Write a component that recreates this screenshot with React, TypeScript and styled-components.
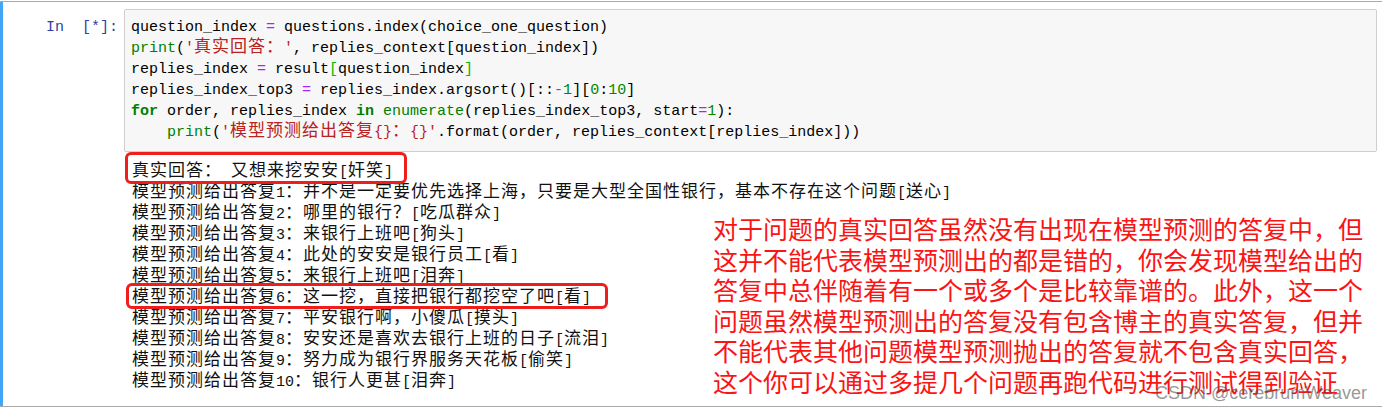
import React from "react";
import styled, { createGlobalStyle } from "styled-components";

const GlobalStyle = createGlobalStyle`
  html, body {
    margin: 0;
    padding: 0;
    background: #fff;
  }
  body {
    width: 1382px;
    height: 410px;
    overflow: hidden;
  }
`;

const MONO = `"Liberation Mono", "Noto Sans CJK SC", monospace`;

const Page = styled.div`
  position: relative;
  padding-top: 1px;
  font-family: ${MONO};
  font-size: 15px;
`;

const Cell = styled.div`
  border-top: 1px solid #ababab;
  border-bottom: 1px solid #ababab;
`;

const CellBody = styled.div`
  display: grid;
  grid-template-columns: 121px 1fr;
  row-gap: 10px;
  padding: 7px 5px 13px 0;
  border-left: 3px solid #42a5f5;
`;

const Prompt = styled.div`
  padding: 8px 6px 0 0;
  text-align: right;
  line-height: 21px;
  white-space: pre;
  color: #303f9f;
`;

const InputArea = styled.div`
  padding: 7px 6px 8px;
  background: #f7f7f7;
  border: 1px solid #cfcfcf;
  border-radius: 2px;
  color: #000;
`;

const Line = styled.div`
  height: 21px;
  line-height: 21px;
  white-space: pre;
`;

const Output = styled.div`
  grid-column: 2;
  padding-left: 8px;
  color: #111;
`;

// CJK glyphs take two monospace cells, as in the SimSun screenshot
const Han = styled.span`
  font-family: "Noto Sans CJK SC", sans-serif;
  font-size: 17px;
  line-height: 14px;
  letter-spacing: 1px;
`;

const tokenColors: Record<string, string> = {
  n: "#000",
  k: "#008000",
  b: "#008000",
  s: "#ba2121",
  o: "#aa22ff",
  m: "#008800",
  br: "#00bb00",
};

const Token = styled.span<{ $kind: string }>`
  color: ${(p) => tokenColors[p.$kind]};
  font-weight: ${(p) => (p.$kind === "k" ? 700 : 400)};
`;

const Marked = styled.span<{ $inset: string }>`
  position: relative;
  display: inline-block;
  height: 21px;

  &::after {
    content: "";
    position: absolute;
    inset: ${(p) => p.$inset};
    border: 3px solid #f01d1d;
    border-radius: 6px;
  }
`;

const Note = styled.div`
  position: absolute;
  left: 713px;
  top: 213px;
  width: 650px;
  font-family: "Noto Sans CJK SC", sans-serif;
  font-size: 25px;
  line-height: 30.5px;
  color: #fa1414;
  white-space: nowrap;
`;

const NoteLine = styled.div<{ $last?: boolean }>`
  text-align: justify;
  text-align-last: ${(p) => (p.$last ? "left" : "justify")};
`;

const Watermark = styled.div`
  position: absolute;
  right: 15px;
  top: 382px;
  font-family: "Liberation Sans", Arial, sans-serif;
  font-size: 18px;
  line-height: 22px;
  color: rgba(80, 80, 80, 0.6);
`;

const CJK = /([\u3000-\u9fff\uff00-\uffef]+)/;

const mix = (text: string) =>
  text
    .split(CJK)
    .filter((part) => part !== "")
    .map((part, i) => (CJK.test(part) ? <Han key={i}>{part}</Han> : part));

type Tok = [string, string];

const code: Tok[][] = [
  [["n", "question_index "], ["o", "="], ["n", " questions.index(choice_one_question)"]],
  [["b", "print"], ["n", "("], ["s", "'真实回答：'"], ["n", ", replies_context[question_index])"]],
  [["n", "replies_index "], ["o", "="], ["n", " result"], ["br", "["], ["n", "question_index"], ["br", "]"]],
  [
    ["n", "replies_index_top3 "], ["o", "="], ["n", " replies_index.argsort()[::"], ["o", "-"],
    ["m", "1"], ["n", "]["], ["m", "0"], ["n", ":"], ["m", "10"], ["n", "]"],
  ],
  [
    ["k", "for"], ["n", " order, replies_index "], ["k", "in"], ["n", " "], ["b", "enumerate"],
    ["n", "(replies_index_top3, start"], ["o", "="], ["m", "1"], ["n", "):"],
  ],
  [["n", "    "], ["b", "print"], ["n", "("], ["s", "'模型预测给出答复{}：{}'"], ["n", ".format(order, replies_context[replies_index]))"]],
];

const outputs = [
  "真实回答： 又想来挖安安[奸笑]",
  "模型预测给出答复1：并不是一定要优先选择上海，只要是大型全国性银行，基本不存在这个问题[送心]",
  "模型预测给出答复2：哪里的银行？[吃瓜群众]",
  "模型预测给出答复3：来银行上班吧[狗头]",
  "模型预测给出答复4：此处的安安是银行员工[看]",
  "模型预测给出答复5：来银行上班吧[泪奔]",
  "模型预测给出答复6：这一挖，直接把银行都挖空了吧[看]",
  "模型预测给出答复7：平安银行啊，小傻瓜[摸头]",
  "模型预测给出答复8：安安还是喜欢去银行上班的日子[流泪]",
  "模型预测给出答复9：努力成为银行界服务天花板[偷笑]",
  "模型预测给出答复10：银行人更甚[泪奔]",
];

// red boxes drawn over the screenshot
const marks: Record<number, string> = {
  0: "-10px -14px -1px -7px",
  6: "-5px -17px 0px -6px",
};

const notes = [
  "对于问题的真实回答虽然没有出现在模型预测的答复中，但",
  "这并不能代表模型预测出的都是错的，你会发现模型给出的",
  "答复中总伴随着有一个或多个是比较靠谱的。此外，这一个",
  "问题虽然模型预测出的答复没有包含博主的真实答复，但并",
  "不能代表其他问题模型预测抛出的答复就不包含真实回答，",
  "这个你可以通过多提几个问题再跑代码进行测试得到验证",
];

export default function App() {
  return (
    <Page>
      <GlobalStyle />
      <Cell>
        <CellBody>
          <Prompt>In  [*]:</Prompt>
          <InputArea>
            {code.map((line, i) => (
              <Line key={i}>
                {line.map(([kind, text], j) => (
                  <Token key={j} $kind={kind}>
                    {mix(text)}
                  </Token>
                ))}
              </Line>
            ))}
          </InputArea>
          <Output>
            {outputs.map((text, i) => (
              <Line key={i}>
                {marks[i] ? <Marked $inset={marks[i]}>{mix(text)}</Marked> : mix(text)}
              </Line>
            ))}
          </Output>
        </CellBody>
      </Cell>
      <Note>
        {notes.map((n, i) => (
          <NoteLine key={n} $last={i === notes.length - 1}>
            {n}
          </NoteLine>
        ))}
      </Note>
      <Watermark>CSDN @cerebrumWeaver</Watermark>
    </Page>
  );
}
